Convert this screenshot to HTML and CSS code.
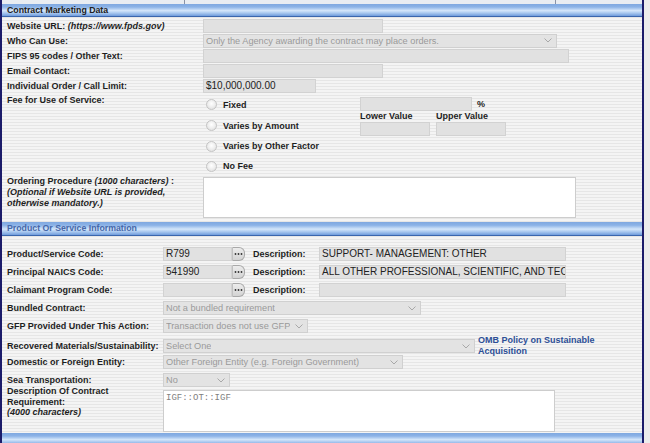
FILE: index.html
```html
<!DOCTYPE html>
<html>
<head>
<meta charset="utf-8">
<title>Contract Marketing Data</title>
<link rel="stylesheet" href="styles.css">
</head>
<body>
<div class="frame">
  <div class="topstrip"><span class="gap1"></span><span class="tick"></span><span class="gap2"></span><span class="tick"></span></div>

  <div class="sec-head">Contract Marketing Data</div>
  <div class="sec s1">
    <div class="row">
      <div class="lbl">Website URL: <i>(https://www.fpds.gov)</i></div>
      <div class="val"><div class="inp w180"></div></div>
    </div>
    <div class="row">
      <div class="lbl">Who Can Use:</div>
      <div class="val"><div class="sel w354"><span class="sel-txt">Only the Agency awarding the contract may place orders.</span><svg class="chev" width="8" height="5" viewBox="0 0 8 5"><polyline points="0.5,0.5 4,4 7.5,0.5" fill="none" stroke="#a8a8a8" stroke-width="1"/></svg></div></div>
    </div>
    <div class="row">
      <div class="lbl">FIPS 95 codes / Other Text:</div>
      <div class="val"><div class="inp w366"></div></div>
    </div>
    <div class="row">
      <div class="lbl">Email Contact:</div>
      <div class="val"><div class="inp w180"></div></div>
    </div>
    <div class="row">
      <div class="lbl">Individual Order / Call Limit:</div>
      <div class="val"><div class="inp w113">$10,000,000.00</div></div>
    </div>

    <div class="fee">
      <div class="lbl fee-lbl">Fee for Use of Service:</div>
      <div class="opts">
        <div class="opt o1"><span class="radio"></span><span class="opt-txt">Fixed</span></div>
        <div class="opt"><span class="radio"></span><span class="opt-txt">Varies by Amount</span></div>
        <div class="opt o3"><span class="radio"></span><span class="opt-txt">Varies by Other Factor</span></div>
        <div class="opt o3"><span class="radio"></span><span class="opt-txt">No Fee</span></div>
      </div>
      <div class="extras">
        <div class="pct-row"><div class="inp w112"></div><span class="pct">%</span></div>
        <div class="range">
          <div class="range-col"><div class="range-lbl">Lower Value</div><div class="inp w70"></div></div>
          <div class="range-col"><div class="range-lbl">Upper Value</div><div class="inp w70"></div></div>
        </div>
      </div>
    </div>

    <div class="order">
      <div class="lbl order-lbl">Ordering Procedure <i>(1000 characters)</i> :<br><i>(Optional if Website URL is provided,<br>otherwise mandatory.)</i></div>
      <div class="val-top"><div class="area w373"></div></div>
    </div>
  </div>

  <div class="sec-head blue">Product Or Service Information</div>
  <div class="sec s2">
    <div class="row2">
      <div class="lbl">Product/Service Code:</div>
      <div class="val">
        <div class="inp w69">R799</div><span class="btn"><svg width="9" height="4" viewBox="0 0 9 4"><circle cx="1.5" cy="2" r="0.9" fill="#333"/><circle cx="4.5" cy="2" r="0.9" fill="#333"/><circle cx="7.5" cy="2" r="0.9" fill="#333"/></svg></span>
        <span class="desc-lbl">Description:</span>
        <div class="inp w247">SUPPORT- MANAGEMENT: OTHER</div>
      </div>
    </div>
    <div class="row2">
      <div class="lbl">Principal NAICS Code:</div>
      <div class="val">
        <div class="inp w69">541990</div><span class="btn"><svg width="9" height="4" viewBox="0 0 9 4"><circle cx="1.5" cy="2" r="0.9" fill="#333"/><circle cx="4.5" cy="2" r="0.9" fill="#333"/><circle cx="7.5" cy="2" r="0.9" fill="#333"/></svg></span>
        <span class="desc-lbl">Description:</span>
        <div class="inp w247 clip">ALL OTHER PROFESSIONAL, SCIENTIFIC, AND TECHNICAL SERVICES</div>
      </div>
    </div>
    <div class="row2">
      <div class="lbl">Claimant Program Code:</div>
      <div class="val">
        <div class="inp w69"></div><span class="btn"><svg width="9" height="4" viewBox="0 0 9 4"><circle cx="1.5" cy="2" r="0.9" fill="#333"/><circle cx="4.5" cy="2" r="0.9" fill="#333"/><circle cx="7.5" cy="2" r="0.9" fill="#333"/></svg></span>
        <span class="desc-lbl">Description:</span>
        <div class="inp w247"></div>
      </div>
    </div>
    <div class="row2">
      <div class="lbl">Bundled Contract:</div>
      <div class="val"><div class="sel w258"><span class="sel-txt">Not a bundled requirement</span><svg class="chev" width="8" height="5" viewBox="0 0 8 5"><polyline points="0.5,0.5 4,4 7.5,0.5" fill="none" stroke="#a8a8a8" stroke-width="1"/></svg></div></div>
    </div>
    <div class="row2">
      <div class="lbl">GFP Provided Under This Action:</div>
      <div class="val"><div class="sel w145"><span class="sel-txt">Transaction does not use GFP</span><svg class="chev" width="8" height="5" viewBox="0 0 8 5"><polyline points="0.5,0.5 4,4 7.5,0.5" fill="none" stroke="#a8a8a8" stroke-width="1"/></svg></div></div>
    </div>
    <div class="row2">
      <div class="lbl">Recovered Materials/Sustainability:</div>
      <div class="val"><div class="sel w312"><span class="sel-txt">Select One</span><svg class="chev" width="8" height="5" viewBox="0 0 8 5"><polyline points="0.5,0.5 4,4 7.5,0.5" fill="none" stroke="#a8a8a8" stroke-width="1"/></svg></div><a class="omb" href="#">OMB Policy on Sustainable<br>Acquisition</a></div>
    </div>
    <div class="row2">
      <div class="lbl">Domestic or Foreign Entity:</div>
      <div class="val"><div class="sel w240"><span class="sel-txt">Other Foreign Entity (e.g. Foreign Government)</span><svg class="chev" width="8" height="5" viewBox="0 0 8 5"><polyline points="0.5,0.5 4,4 7.5,0.5" fill="none" stroke="#a8a8a8" stroke-width="1"/></svg></div></div>
    </div>
    <div class="row2">
      <div class="lbl">Sea Transportation:</div>
      <div class="val"><div class="sel w67"><span class="sel-txt">No</span><svg class="chev" width="8" height="5" viewBox="0 0 8 5"><polyline points="0.5,0.5 4,4 7.5,0.5" fill="none" stroke="#a8a8a8" stroke-width="1"/></svg></div></div>
    </div>
    <div class="desc-row">
      <div class="lbl desc-main">Description Of Contract<br>Requirement:<br><i>(4000 characters)</i></div>
      <div class="val-top"><div class="area w392 mono">IGF::OT::IGF</div></div>
    </div>
  </div>
  <div class="sec-head"></div>
</div>
</body>
</html>
```

FILE: styles.css
```css
html, body {
  margin: 0;
  padding: 0;
}
body {
  background: #ececec;
  font-family: "Liberation Sans", Arial, sans-serif;
  color: #1e1e1e;
  width: 650px;
  height: 443px;
  overflow: hidden;
}
.frame {
  width: 640px;
  height: 443px;
  overflow: hidden;
  border-left: 2px solid #1c1c6a;
  border-right: 2px solid #1c1c6a;
  background: repeating-linear-gradient(to bottom, #f4f4f4 0, #f4f4f4 2px, #e6e6e6 2px, #e6e6e6 3px);
}
.topstrip {
  height: 4px;
  display: flex;
  background: #e9edf2;
}
.gap1 { width: 182px; }
.gap2 { width: 370px; }
.tick { width: 1px; background: #8a93a6; }

.sec-head {
  height: 12px;
  border-bottom: 1px solid #3a66ad;
  background: linear-gradient(to bottom, #7fa8e0 0%, #8cb3e7 25%, #d4e6fa 55%, #a9c8ef 75%, #6f9cdc 100%);
  font-size: 8.75px;
  font-weight: bold;
  line-height: 12px;
  padding-left: 5px;
  color: #202020;
}
.sec-head.blue {
  color: #4668aa;
  margin-top: 1px;
  height: 13px;
  line-height: 13px;
}
.s1 { padding-top: 1px; }
.s2 { padding-top: 9px; }

.lbl {
  padding-left: 5px;
  font-size: 9px;
  font-weight: bold;
  white-space: nowrap;
  color: #1e1e1e;
}
.row {
  display: grid;
  grid-template-columns: 201px 1fr;
  height: 15px;
  align-items: center;
}
.row2 {
  display: grid;
  grid-template-columns: 161px 1fr;
  height: 18px;
  align-items: center;
}
.val {
  display: flex;
  align-items: center;
}
.val-top {
  display: flex;
  align-items: flex-start;
}

.inp {
  box-sizing: border-box;
  height: 14px;
  background: #e1e1e1;
  border: 1px solid #d2d2d2;
  font-size: 10px;
  line-height: 12px;
  padding-left: 2px;
  color: #222;
  white-space: nowrap;
  overflow: hidden;
}
.sel {
  box-sizing: border-box;
  height: 14px;
  background: #e3e3e3;
  border: 1px solid #d0d0d0;
  display: flex;
  align-items: center;
  justify-content: space-between;
  padding: 0 4px 0 2px;
  font-size: 9.2px;
  color: #9a9a9a;
  white-space: nowrap;
  overflow: hidden;
}
.sel-txt { overflow: hidden; }
.chev { flex: none; }

.area {
  box-sizing: border-box;
  background: #ffffff;
  border: 1px solid #cdcdcd;
}
.mono {
  font-family: "Liberation Mono", "Courier New", monospace;
  font-size: 9px;
  color: #808080;
  padding: 2px 0 0 2px;
  line-height: 11px;
}

.w67 { width: 67px; }
.w69 { width: 69px; }
.w70 { width: 70px; }
.w112 { width: 112px; }
.w113 { width: 113px; }
.w145 { width: 145px; }
.w180 { width: 180px; }
.w240 { width: 240px; }
.w247 { width: 247px; }
.w258 { width: 258px; }
.w312 { width: 312px; }
.w354 { width: 354px; }
.w366 { width: 366px; }
.w373 { width: 373px; height: 41px; margin-top: 1px; }
.w392 { width: 392px; height: 42px; margin-top: 1px; }

/* Fee block */
.fee {
  display: grid;
  grid-template-columns: 201px 157px auto;
  height: 83px;
}
.fee-lbl {
  padding-top: 2px;
  line-height: 11px;
}
.opts {
  display: flex;
  flex-direction: column;
  padding-top: 1px;
}
.opt {
  height: 21px;
  display: flex;
  align-items: center;
  padding-left: 3px;
}
.opt.o3 { height: 20px; }
.radio {
  box-sizing: border-box;
  width: 11px;
  height: 11px;
  border-radius: 50%;
  border: 1px solid #c4c4c4;
  background: radial-gradient(circle at 50% 40%, #ffffff 0%, #f0f0f0 45%, #d9d9d9 100%);
  flex: none;
}
.opt-txt {
  margin-left: 6px;
  font-size: 9px;
  font-weight: bold;
  color: #1e1e1e;
}
.extras {
  padding-top: 4px;
  display: flex;
  flex-direction: column;
}
.pct-row {
  display: flex;
  align-items: center;
}
.pct {
  margin-left: 5px;
  font-size: 9px;
  font-weight: bold;
}
.range {
  display: flex;
  gap: 6px;
}
.range-col {
  display: flex;
  flex-direction: column;
}
.range-lbl {
  font-size: 9px;
  font-weight: bold;
  line-height: 11px;
  height: 11px;
}

.order {
  display: grid;
  grid-template-columns: 201px 1fr;
  height: 45px;
}
.order-lbl {
  line-height: 11px;
}

/* Section 2 */
.btn {
  box-sizing: border-box;
  width: 13px;
  height: 14px;
  border: 1px solid #a9a9a9;
  border-left: 1px solid #c0c0c0;
  border-radius: 0 6px 6px 0;
  background: linear-gradient(to bottom, #ececec, #d3d3d3);
  display: flex;
  align-items: center;
  justify-content: center;
  flex: none;
}
.desc-lbl {
  width: 66px;
  padding-left: 8px;
  box-sizing: content-box;
  font-size: 9px;
  font-weight: bold;
  color: #1e1e1e;
}
.clip { text-overflow: clip; }
.omb {
  margin-left: 3px;
  font-size: 9px;
  font-weight: bold;
  line-height: 11px;
  color: #2d4f97;
  text-decoration: none;
}
.desc-row {
  display: grid;
  grid-template-columns: 161px 1fr;
  height: 44px;
}
.desc-main {
  line-height: 10.5px;
  margin-top: -3px;
}
```
